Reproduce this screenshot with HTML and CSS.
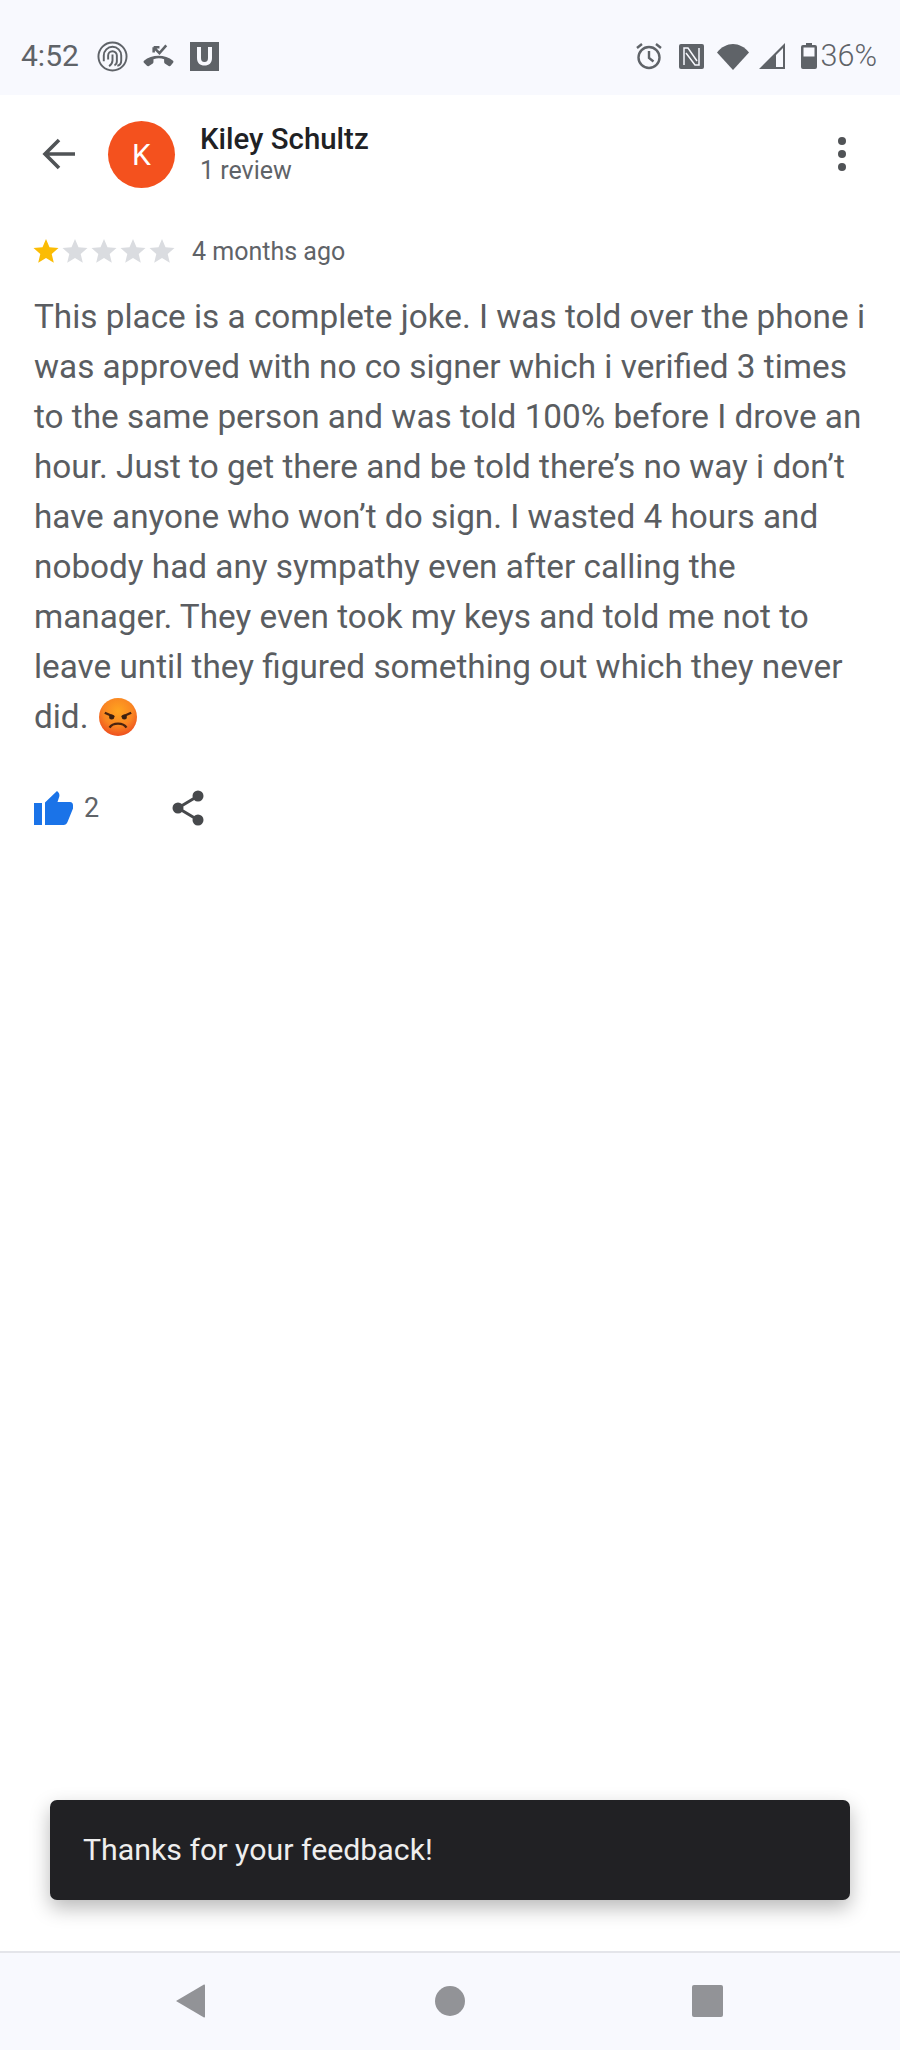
FILE: index.html
```html
<!DOCTYPE html>
<html lang="en">
<head>
  <meta charset="utf-8">
  <title>Kiley Schultz - review</title>
  <link rel="stylesheet" href="styles.css">
</head>
<body>
  <div class="screen">
    <div class="status-bar">
      <div class="status-left">
        <span class="time">4:52</span>
        <svg class="icon-at" viewBox="0 0 32 32"><g fill="none" stroke="#5f6368" stroke-width="2"><circle cx="16" cy="16" r="14.500"/><path d="M7 21v-6a9 9 0 0 1 18 0v5c0 3-1.500 5-4 5.500"/><path d="M11.500 19v-4a4.500 4.500 0 0 1 9 0v6c0 2-1 3.500-2.500 4"/><path d="M16 14v6c0 2-1 4-3.500 6"/></g></svg>
        <svg class="icon-call" viewBox="0 0 32 24"><path d="M1 17c8-7 22-7 30 0 .6.6.6 1.200 0 2l-2.500 3c-.6.6-1.300.6-2 .2l-4-2.500c-.5-.4-.7-.9-.7-1.400v-3c-3.500-1.200-7-1.200-11 0v3c0 .6-.2 1-.7 1.400l-4 2.500c-.7.4-1.400.4-2-.2L1 19c-.6-.8-.6-1.400 0-2z" fill="#5f6368"/><path d="M11 3l6 6 7-8M11 3v5.500M11 3h6" fill="none" stroke="#5f6368" stroke-width="2.600"/></svg>
        <svg class="icon-u" viewBox="0 0 29 29"><path fill-rule="evenodd" d="M0 0h29v29H0zM7 5v11c0 5 3 7.500 7.500 7.500S22 21 22 16V5h-4v11c0 2.500-1 4-3.500 4S11 18.500 11 16V5z" fill="#5f6368"/></svg>
      </div>
      <div class="status-right">
        <svg class="icon-alarm" viewBox="0 0 28 28"><g fill="none" stroke="#5f6368" stroke-width="2.400"><circle cx="14" cy="15.500" r="10.500"/><path d="M14 9v7l4.500 3.500M2 6l5-4M26 6l-5-4"/></g></svg>
        <svg class="icon-nfc" viewBox="0 0 25 25"><rect width="25" height="25" rx="2" fill="#5f6368"/><path d="M5 21V4h4l9 13M20 4v17h-4L7 9" fill="none" stroke="#f8f9fe" stroke-width="1.500"/></svg>
        <svg class="icon-wifi" viewBox="0 0 32 27"><path d="M0 9.500C9-2 23-2 32 9.500L16 27z" fill="#5f6368"/></svg>
        <svg class="icon-signal" viewBox="0 0 26 26"><path d="M26 0v26H0zM24 5l-7 7v12h7z" fill="#5f6368" fill-rule="evenodd"/></svg>
        <svg class="icon-battery" viewBox="0 0 16 26"><path fill-rule="evenodd" d="M5 0h6v2h3a2 2 0 0 1 2 2v20a2 2 0 0 1-2 2H2a2 2 0 0 1-2-2V4a2 2 0 0 1 2-2h3zM2.500 4.500v9h11v-9z" fill="#5f6368"/></svg>
        <span class="battery-text">36%</span>
      </div>
    </div>

    <div class="content">
      <div class="header">
        <svg class="back" viewBox="0 0 34 34"><path d="M33 17H4M17 3L3 17l14 14" fill="none" stroke="#505356" stroke-width="3.600"/></svg>
        <div class="avatar">K</div>
        <div class="author">
          <div class="name">Kiley Schultz</div>
          <div class="count">1 review</div>
        </div>
        <div class="more"><i></i><i></i><i></i></div>
      </div>

      <div class="rating">
        <svg class="stars" viewBox="0 0 142 26">
          <path d="M13 1l3.500 8.300 9 .7-6.800 5.900 2.100 8.800L13 20.100l-7.800 4.600 2.100-8.800L.5 10l9-.7z" fill="#fbbc04"/>
          <path d="M42 1l3.500 8.300 9 .7-6.800 5.900 2.100 8.800L42 20.100l-7.800 4.600 2.100-8.800L29.500 10l9-.7z" fill="#dadce0"/>
          <path d="M71 1l3.500 8.300 9 .7-6.800 5.900 2.100 8.800L71 20.100l-7.800 4.600 2.100-8.800L58.500 10l9-.7z" fill="#dadce0"/>
          <path d="M100 1l3.500 8.300 9 .7-6.800 5.900 2.100 8.800L100 20.100l-7.800 4.600 2.100-8.800L87.500 10l9-.7z" fill="#dadce0"/>
          <path d="M129 1l3.500 8.300 9 .7-6.800 5.900 2.100 8.800L129 20.100l-7.800 4.600 2.100-8.800L116.500 10l9-.7z" fill="#dadce0"/>
        </svg>
        <span class="age">4 months ago</span>
      </div>

      <p class="review">This place is a complete joke. I was told over the phone i was approved with no co signer which i verified 3 times to the same person and was told 100% before I drove an hour. Just to get there and be told there’s no way i don’t have anyone who won’t do sign. I wasted 4 hours and nobody had any sympathy even after calling the manager. They even took my keys and told me not to leave until they figured something out which they never did. <svg class="emoji" viewBox="0 0 36 36"><defs><radialGradient id="angry" cx="50%" cy="35%" r="65%"><stop offset="0" stop-color="#ffa51f"/><stop offset="0.6" stop-color="#f98522"/><stop offset="1" stop-color="#ee4f1f"/></radialGradient></defs><circle cx="18" cy="18" r="18" fill="url(#angry)"/><path d="M6 13l9 4-1 2-9-4zM30 13l-9 4 1 2 9-4z" fill="#4a2410"/><circle cx="12" cy="18" r="2.400" fill="#3a2010"/><circle cx="24" cy="18" r="2.400" fill="#3a2010"/><path d="M10 28c3-5 13-5 16 0" fill="none" stroke="#4a2410" stroke-width="2.200"/></svg></p>

      <div class="actions">
        <svg class="thumb" viewBox="0 0 39 34"><path d="M0 12h8v22H0zM11 34V11.500L23 0c2 1.500 2.800 3.500 2.300 5.500L23.500 11H36c2 0 3 1.500 3 3.500v3L33.500 31c-.8 2-2 3-4 3z" fill="#1a73e8"/></svg>
        <span class="likes">2</span>
        <svg class="share" viewBox="0 0 32 36"><g fill="#47494c"><circle cx="26" cy="6" r="5.500"/><circle cx="6" cy="18" r="5.500"/><circle cx="26" cy="30" r="5.500"/></g><path d="M26 6L6 18l20 12" fill="none" stroke="#47494c" stroke-width="3"/></svg>
      </div>

      <div class="toast">Thanks for your feedback!</div>
    </div>

    <div class="nav-bar">
      <svg class="nav-back" viewBox="0 0 29 34"><path d="M28 .5c.7 0 1 .5 1 1v31c0 .5-.3 1-1 1L0 17z" fill="#929397"/></svg>
      <div class="nav-home"></div>
      <div class="nav-recent"></div>
    </div>
  </div>
</body>
</html>
```

FILE: styles.css
```css
body {
  margin: 0;
  background: #fff;
  font-family: Roboto, sans-serif;
  color: #5f6368;
}
svg {
  display: block;
  flex: none;
}
.screen {
  width: 900px;
  height: 2050px;
  display: flex;
  flex-direction: column;
  overflow: hidden;
}

/* Status bar */
.status-bar {
  height: 95px;
  background: #f8f9fe;
  display: flex;
  justify-content: space-between;
  align-items: center;
  padding: 17px 23px 0 21px;
  box-sizing: border-box;
}
.status-left, .status-right {
  display: flex;
  align-items: center;
}
.time {
  font-size: 30px;
  line-height: 32px;
}
.battery-text {
  font-size: 30.500px;
  line-height: 32px;
  font-weight: 300;
  margin-left: 4px;
}
.icon-at { width: 31px; height: 31px; margin-left: 18px; }
.icon-call { width: 31px; height: 24px; margin-left: 15px; }
.icon-u { width: 29px; height: 29px; margin-left: 16px; }
.icon-alarm { width: 28px; height: 28px; }
.icon-nfc { width: 25px; height: 25px; margin-left: 16px; }
.icon-wifi { width: 32px; height: 27px; margin-left: 13px; }
.icon-signal { width: 26px; height: 26px; margin-left: 10px; }
.icon-battery { width: 16px; height: 26px; margin-left: 16px; }

/* Main area */
.content {
  flex: 1;
  position: relative;
  padding: 0 34px;
}
.header {
  display: flex;
  align-items: center;
  height: 68px;
  margin-top: 25px;
}
.back {
  width: 34px;
  height: 34px;
  margin-left: 8px;
}
.avatar {
  width: 67px;
  height: 67px;
  margin-left: 32px;
  border-radius: 50%;
  background: #f4511e;
  color: #fff;
  font-size: 30px;
  display: flex;
  align-items: center;
  justify-content: center;
}
.author {
  margin-left: 25px;
  flex: 1;
}
.name {
  font-size: 29.400px;
  line-height: 34px;
  font-weight: 500;
  color: #202124;
}
.count {
  font-size: 25px;
  line-height: 30px;
}
.more {
  display: flex;
  flex-direction: column;
  gap: 5px;
  margin-right: 20px;
}
.more i {
  width: 8px;
  height: 8px;
  border-radius: 50%;
  background: #505356;
}
.rating {
  display: flex;
  align-items: center;
  margin-top: 47px;
  height: 32px;
}
.stars {
  width: 142px;
  height: 26px;
  margin-left: -1px;
}
.age {
  font-size: 25px;
  margin-left: 17px;
}
.review {
  margin: 25px 0 0;
  font-size: 33.300px;
  line-height: 50px;
  width: 840px;
  color: #5a5d61;
}
.emoji {
  display: inline-block;
  width: 38px;
  height: 38px;
  margin-left: 2px;
  vertical-align: -8px;
}
.actions {
  display: flex;
  align-items: center;
  margin-top: 48px;
}
.thumb {
  width: 39px;
  height: 34px;
}
.likes {
  font-size: 27px;
  margin-left: 11px;
}
.share {
  width: 32px;
  height: 36px;
  margin-left: 73px;
}
.toast {
  position: absolute;
  left: 50px;
  right: 50px;
  bottom: 51px;
  height: 100px;
  box-sizing: border-box;
  padding: 0 0 2px 33px;
  display: flex;
  align-items: center;
  background: #212124;
  color: #eee;
  font-size: 30.300px;
  border-radius: 7px;
  box-shadow: 0 8px 20px rgba(0,0,0,.28);
}

/* Navigation bar */
.nav-bar {
  height: 99px;
  box-sizing: border-box;
  background: #f8f9fe;
  border-top: 2px solid #e4e5ea;
  display: flex;
  align-items: center;
  padding: 0 0 1px 176px;
}
.nav-back {
  width: 29px;
  height: 34px;
}
.nav-home {
  width: 30px;
  height: 30px;
  margin-left: 230px;
  border-radius: 50%;
  background: #929397;
}
.nav-recent {
  width: 31px;
  height: 32px;
  margin-left: 227px;
  border-radius: 2px;
  background: #929397;
}
```
